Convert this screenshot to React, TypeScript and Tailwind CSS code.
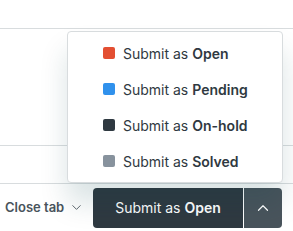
import { ChevronDown, ChevronUp } from "lucide-react";

const statuses = [
  { label: "Open", color: "bg-[#e34f32]" },
  { label: "Pending", color: "bg-[#3091ec]" },
  { label: "On-hold", color: "bg-[#2f3941]" },
  { label: "Solved", color: "bg-[#87929d]" },
];

export default function App() {
  return (
    <div className="relative h-[231px] w-[293px] overflow-hidden bg-white font-['Inter',sans-serif] antialiased text-[#2f3941]">
      {/* Background panels */}
      <div className="h-[29px] border-b border-[#d8dcde]" />
      <div className="h-[117px] border-b border-[#d8dcde]" />
      <div className="h-[38px] border-b border-[#d8dcde]" />

      {/* Footer */}
      <footer className="flex h-[47px] items-center justify-between pl-[5px] pr-[11px]">
        <button className="flex items-center gap-[5px] text-[13px] font-semibold text-[#49545c]">
          Close tab
          <ChevronDown size={15} strokeWidth={1.4} />
        </button>
        <div className="flex h-[40px] overflow-hidden rounded-[4px]">
          <button className="w-[150px] bg-[#2f3941] text-[14px] text-white">
            Submit as <span className="font-semibold">Open</span>
          </button>
          <button className="ml-px flex w-[38px] items-center justify-center bg-[#49545c] text-white">
            <ChevronUp size={18} strokeWidth={1.6} />
          </button>
        </div>
      </footer>

      {/* Status menu */}
      <ul className="absolute left-[67px] top-[31px] w-[216px] rounded-[4px] border border-[#d8dcde] bg-white py-[3px] shadow-[0_20px_28px_0_rgba(4,68,77,0.15)]">
        {statuses.map((s) => (
          <li key={s.label} className="flex h-[36px] items-center pl-[35px] text-[14px]">
            <span className={`mr-[8px] h-[12px] w-[12px] rounded-[2px] ${s.color}`} />
            <span>
              Submit as <span className="font-semibold">{s.label}</span>
            </span>
          </li>
        ))}
      </ul>
    </div>
  );
}
